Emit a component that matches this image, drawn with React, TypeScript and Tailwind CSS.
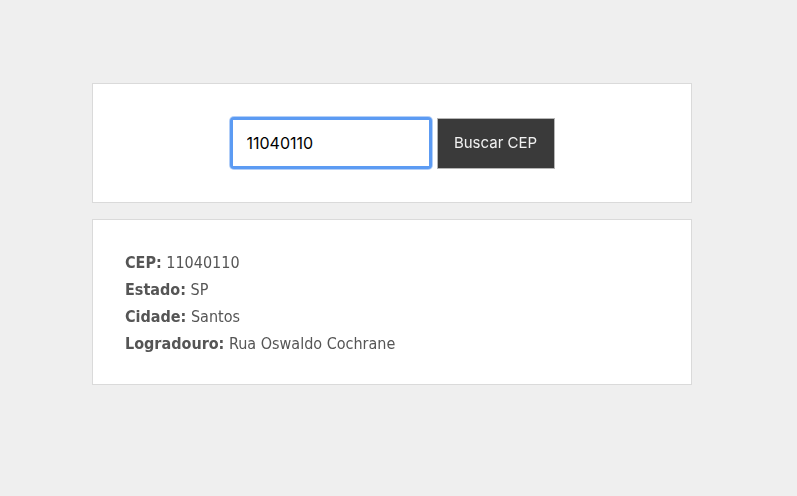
import { useState } from "react";

const result = [
  { label: "CEP:", value: "11040110" },
  { label: "Estado:", value: "SP" },
  { label: "Cidade:", value: "Santos" },
  { label: "Logradouro:", value: "Rua Oswaldo Cochrane" },
];

export default function App() {
  const [cep, setCep] = useState("11040110");

  return (
    <div className="min-h-[496px] bg-[#efefef] pt-[83px] font-['DejaVu_Sans_Condensed','DejaVu_Sans',sans-serif]">
      <div className="ml-[92px] w-[600px]">
        {/* Search */}
        <div className="flex h-[120px] items-center justify-center gap-[5px] border border-[#dadada] bg-white">
          <div className="rounded-[4px] bg-[#5c9bf3] p-[3px] shadow-[0_0_0_1px_#b3cff8]">
            <input
              autoFocus
              value={cep}
              onChange={(e) => setCep(e.target.value)}
              className="block h-[46px] w-[196px] bg-white px-[14px] font-['Inter',sans-serif] text-[16px] text-black caret-black outline-none"
            />
          </div>
          <button className="h-[51px] w-[118px] border border-[#b5b5b5] bg-[#3a3a3a] font-['Inter',sans-serif] text-[15px] text-[#f2f2f2]">
            Buscar CEP
          </button>
        </div>

        {/* Result */}
        <div className="mt-[16px] border border-[#dadada] bg-white px-8 pt-[29px] pb-[27px] text-[16px] leading-[27px] text-[#555]">
          {result.map((r) => (
            <div key={r.label}>
              <span className="font-bold">{r.label}</span> {r.value}
            </div>
          ))}
        </div>
      </div>
    </div>
  );
}
